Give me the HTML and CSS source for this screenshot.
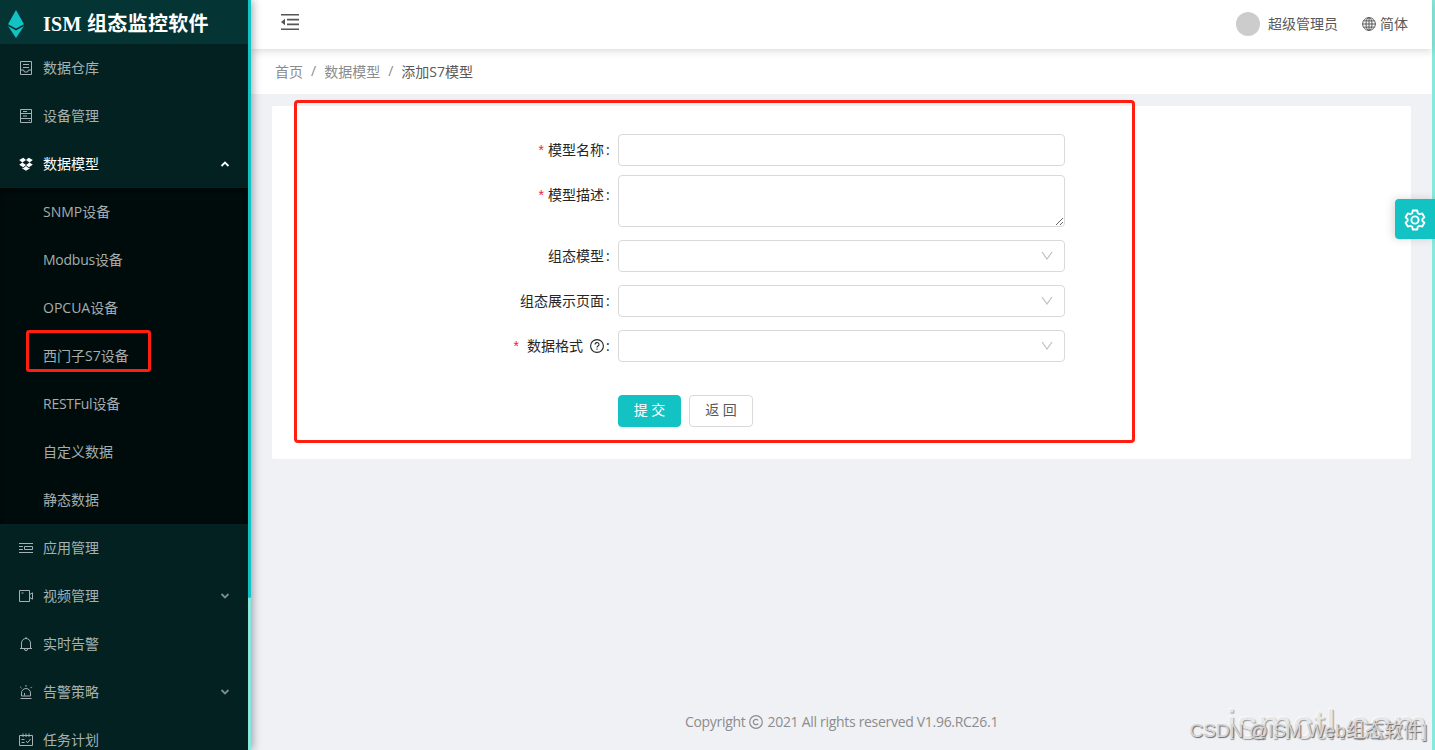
FILE: index.html
```html
<!DOCTYPE html>
<html lang="zh-CN">
<head>
  <meta charset="utf-8">
  <title>ISM 组态监控软件</title>
  <link rel="stylesheet" href="styles.css">
</head>
<body>
  <div class="layout">
    <aside class="sidebar">
      <div class="sidebar-content">
        <div class="logo">
          <svg class="logo-icon" viewBox="0 0 16 28">
            <path fill="#13c2c2" d="M8 0l8 14.2-8 4.3-8-4.3zM0 16l8 4.4L16 16 8 28z"/>
          </svg>
          <h1>ISM 组态监控软件</h1>
        </div>
        <ul class="menu">
          <li class="menu-item">
            <svg class="icon" viewBox="0 0 14 14"><path d="M1.5.5h11v13h-11zM4 3.5h6M4 6.5h6M1.5 9h3l1 2h3l1-2h3"/></svg>
            <span>数据仓库</span>
          </li>
          <li class="menu-item">
            <svg class="icon" viewBox="0 0 14 14"><path d="M1.5.5h11v13h-11zM1.5 4.5h11M1.5 9.5h11M4 2.5h4M4 7h4M9.8 11.5h1"/></svg>
            <span>设备管理</span>
          </li>
          <li class="menu-item active">
            <svg class="icon solid" viewBox="0 0 14 14"><path d="M4.2.7L7 3 3.4 5.6.2 3.1zM9.8.7L7 3l3.6 2.6 3.2-2.5zM.2 7.7l3.2-2.1L7 8.1l-2.8 2.2zM13.8 7.7l-3.2-2.1L7 8.1l2.8 2.2zM3.3 10.6l.9.6L7 9l2.8 2.2.9-.6v1L7 13.8l-3.7-2.2z"/></svg>
            <span>数据模型</span>
            <svg class="arrow" viewBox="0 0 10 6"><path d="M1.5 5L5 1.5 8.5 5"/></svg>
          </li>
          <li>
            <ul class="submenu">
              <li>SNMP设备</li>
              <li class="tight">Modbus设备</li>
              <li>OPCUA设备</li>
              <li class="marked">西门子S7设备</li>
              <li class="tight">RESTFul设备</li>
              <li>自定义数据</li>
              <li>静态数据</li>
            </ul>
          </li>
          <li class="menu-item">
            <svg class="icon" viewBox="0 0 14 14"><path d="M0 2.5h14M0 5.5h4M0 8.5h4M0 11.5h14M5.5 5.5h8v3h-8z"/></svg>
            <span>应用管理</span>
          </li>
          <li class="menu-item">
            <svg class="icon" viewBox="0 0 14 14"><path d="M.5 1.5h10v11H.5zM10.5 5.6l3-1.8v6.4l-3-1.8M2.5 4h2"/></svg>
            <span>视频管理</span>
            <svg class="arrow" viewBox="0 0 10 6"><path d="M1.5 1L5 4.5 8.5 1"/></svg>
          </li>
          <li class="menu-item">
            <svg class="icon" viewBox="0 0 14 14"><path d="M2.5 11.5V6a4.5 4.5 0 0 1 9 0v5.5M1 11.5h12M7 0v1.5M5.4 12a1.6 1.6 0 0 0 3.2 0"/></svg>
            <span>实时告警</span>
          </li>
          <li class="menu-item">
            <svg class="icon" viewBox="0 0 14 14"><path d="M2.5 11V8a4.5 4.5 0 0 1 9 0v3M1.5 13.5h11M2.5 11h9M7 0v1.8M1.2 1.8l1.3 1.3M12.8 1.8l-1.3 1.3M5.5 10.5V8"/></svg>
            <span>告警策略</span>
            <svg class="arrow" viewBox="0 0 10 6"><path d="M1.5 1L5 4.5 8.5 1"/></svg>
          </li>
          <li class="menu-item">
            <svg class="icon" viewBox="0 0 14 14"><path d="M.5 2.5h13v10H.5zM4 .5v3.5M7 .5v3.5M10 .5v3.5M2.5 6.5h3M2.5 9.5h3M7 8l1.6 1.8L11.5 6"/></svg>
            <span>任务计划</span>
          </li>
        </ul>
      </div>
      <div class="scroll-track"><div class="scroll-thumb"></div></div>
    </aside>

    <div class="main">
      <header class="header">
        <svg class="fold" viewBox="0 0 18 16"><path fill="none" stroke="#555" stroke-width="1.6" d="M0 .8h18M6 5.6h12M6 10.4h12M0 15.2h18"/><path fill="#555" d="M0 8l4-3.2v6.4z"/></svg>
        <div class="user">
          <span class="avatar"></span>
          <span class="user-name">超级管理员</span>
          <svg class="globe" viewBox="0 0 14 14"><circle cx="7" cy="7" r="6.4"/><ellipse cx="7" cy="7" rx="3" ry="6.4"/><path d="M7 .6v12.8M.6 7h12.8M1.5 3.9h11M1.5 10.1h11"/></svg>
          <span class="lang">简体</span>
        </div>
      </header>

      <nav class="breadcrumb">
        <span>首页</span><i>/</i><span>数据模型</span><i>/</i><span class="current">添加S7模型</span>
      </nav>

      <section class="card">
        <form class="form">
          <div class="form-row">
            <label for="name"><b>*</b><span>模型名称</span><em>:</em></label>
            <input id="name" type="text">
          </div>
          <div class="form-row">
            <label for="desc"><b>*</b><span>模型描述</span><em>:</em></label>
            <textarea id="desc"></textarea>
          </div>
          <div class="form-row">
            <label><span>组态模型</span><em>:</em></label>
            <div class="select"><svg viewBox="0 0 12 10"><path d="M1 1l5 7 5-7"/></svg></div>
          </div>
          <div class="form-row">
            <label><span>组态展示页面</span><em>:</em></label>
            <div class="select"><svg viewBox="0 0 12 10"><path d="M1 1l5 7 5-7"/></svg></div>
          </div>
          <div class="form-row">
            <label><b class="wide">*</b><span>数据格式</span><svg class="help" viewBox="0 0 14 14"><circle cx="7" cy="7" r="6.4"/><path d="M5 5.5a2 1.9 0 1 1 3 1.6c-.7.4-1 .7-1 1.4M7 9.6v1.2"/></svg><em>:</em></label>
            <div class="select"><svg viewBox="0 0 12 10"><path d="M1 1l5 7 5-7"/></svg></div>
          </div>
          <div class="form-actions">
            <button class="btn primary" type="button">提 交</button>
            <button class="btn" type="button">返 回</button>
          </div>
        </form>
      </section>

      <footer class="footer">
        <span>Copyright</span>
        <svg class="copy" viewBox="0 0 14 14"><circle cx="7" cy="7" r="6.3"/><path d="M9.2 5.4a2.7 2.7 0 1 0 0 3.2"/></svg>
        <span>2021 All rights reserved V1.96.RC26.1</span>
      </footer>
    </div>
    <div class="page-scroll"></div>
  </div>

  <div class="form-mark"></div>
  <div class="setting">
    <svg viewBox="0 0 22 22"><path d="M8.8 1.5h4.4l.6 2.7 1.7 1 2.7-.8 2.2 3.8-2 1.9v1.8l2 1.9-2.2 3.8-2.7-.8-1.7 1-.6 2.7H8.8l-.6-2.7-1.7-1-2.7.8-2.2-3.8 2-1.9v-1.8l-2-1.9 2.2-3.8 2.7.8 1.7-1z"/><circle cx="11" cy="11" r="3.6"/></svg>
  </div>
  <div class="watermark site">ismctl.com</div>
  <div class="watermark author">CSDN @ISM Web组态软件]</div>
</body>
</html>
```
FILE: styles.css
```css
*,
*::after {
  box-sizing: border-box;
}

body {
  margin: 0;
  height: 750px;
  overflow: hidden;
  position: relative;
  font-family: "Open Sans", "Noto Sans CJK SC", sans-serif;
  font-size: 14px;
  color: #595959;
  background-color: #f0f1f5;
}

ul {
  list-style: none;
  margin: 0;
  padding: 0;
}

.layout {
  display: flex;
  height: 750px;
}

/* Sidebar */
.sidebar {
  display: flex;
  width: 251px;
  flex-shrink: 0;
  overflow: hidden;
  box-shadow: 2px 0 8px rgba(0, 21, 41, 0.35);
  z-index: 2;
}

.sidebar-content {
  width: 248px;
  background-color: #032121;
}

.logo {
  display: flex;
  align-items: center;
  height: 44px;
  padding: 3px 0 0 8px;
  background-color: #053434;
}

.logo-icon {
  width: 16px;
  height: 28px;
}

.logo h1 {
  margin: 0 0 0 19px;
  font-family: "Liberation Serif", "Noto Sans CJK SC", serif;
  font-size: 20px;
  line-height: 30px;
  font-weight: bold;
  letter-spacing: 0.3px;
  color: #fff;
  white-space: nowrap;
}

.menu-item {
  display: flex;
  align-items: center;
  height: 48px;
  padding: 0 18px 0 19px;
  color: #a6b1b1;
}

.menu-item span {
  margin-bottom: 2px;
}

.menu-item.active {
  color: #fff;
}

.icon {
  width: 14px;
  height: 14px;
  margin-right: 10px;
  fill: none;
  stroke: currentColor;
  stroke-width: 1;
}

.icon.solid {
  fill: currentColor;
  stroke: none;
}

.arrow {
  width: 10px;
  height: 6px;
  margin-left: auto;
  fill: none;
  stroke: currentColor;
  stroke-width: 1.8;
}

.menu-item:not(.active) .arrow {
  stroke: #7d8c8c;
}

.submenu {
  background-color: #000c0c;
  box-shadow: inset 0 2px 8px rgba(0, 0, 0, 0.45);
}

.submenu li {
  height: 48px;
  padding-left: 43px;
  line-height: 48px;
  color: #a6adad;
}

.submenu .tight {
  letter-spacing: -0.25px;
}

.marked {
  position: relative;
}

.marked::after {
  content: "";
  position: absolute;
  left: 26px;
  top: -2px;
  width: 125px;
  height: 42px;
  border: 3px solid #ff1e0f;
  border-radius: 3px;
}

.scroll-track {
  width: 3px;
  background-color: #87e8de;
}

.scroll-thumb {
  height: 598px;
  background-color: #13c2c2;
  border-radius: 0 0 3px 3px;
}

/* Main column */
.main {
  display: flex;
  flex-direction: column;
  flex: 1;
}

.header {
  display: flex;
  align-items: center;
  justify-content: space-between;
  height: 49px;
  padding: 0 24px 0 30px;
  background-color: #fff;
  box-shadow: 0 2px 8px rgba(0, 0, 0, 0.15);
  z-index: 1;
}

.fold {
  width: 18px;
  height: 16px;
  margin-bottom: 5px;
}

.user {
  display: flex;
  align-items: center;
  padding-bottom: 2px;
}

.avatar {
  width: 24px;
  height: 24px;
  margin-right: 8px;
  border-radius: 50%;
  background-color: #ccc;
}

.user-name,
.lang {
  margin-bottom: 2px;
}

.user-name {
  margin-right: 24px;
}

.globe {
  width: 14px;
  height: 14px;
  margin-right: 4px;
  fill: none;
  stroke: #595959;
  stroke-width: 1;
}

.breadcrumb {
  display: flex;
  align-items: center;
  height: 45px;
  padding: 0 0 2px 24px;
  background-color: #fff;
  color: #8c8c8c;
}

.breadcrumb i {
  margin: 0 8px;
  font-style: normal;
}

.breadcrumb .current {
  color: #595959;
}

.card {
  height: 353px;
  margin: 12px 21px 0;
  padding-top: 28px;
  background-color: #fff;
  border-radius: 2px;
}

.form-row {
  display: flex;
  margin-bottom: 13px;
}

.form-row:first-child {
  margin-bottom: 9px;
}

label {
  display: flex;
  align-items: center;
  justify-content: flex-end;
  width: 338px;
  height: 32px;
  margin-right: 8px;
  color: #262626;
}

.form-row:nth-child(2) label {
  height: 40px;
}

label span,
label em {
  margin-bottom: 2px;
}

label b {
  margin-right: 4px;
  font-family: "Liberation Sans", sans-serif;
  font-weight: normal;
  color: #f5222d;
}

label b.wide {
  margin-right: 8px;
}

label em {
  width: 4px;
  margin-left: 2px;
  font-style: normal;
}

.help {
  width: 14px;
  height: 14px;
  margin-left: 7px;
  fill: none;
  stroke: #262626;
  stroke-width: 1.1;
}

input,
textarea,
.select {
  width: 447px;
  height: 32px;
  margin: 0;
  border: 1px solid #d9d9d9;
  border-radius: 4px;
  background-color: #fff;
}

textarea {
  height: 52px;
  resize: vertical;
}

.select {
  display: flex;
  align-items: center;
  justify-content: flex-end;
  padding-right: 11px;
}

.select svg {
  width: 12px;
  height: 10px;
  fill: none;
  stroke: #bfbfbf;
  stroke-width: 1.2;
}

.form-actions {
  display: flex;
  gap: 8px;
  padding: 20px 0 0 346px;
}

.btn {
  width: 64px;
  height: 32px;
  padding: 0 0 4px;
  border: 1px solid #d9d9d9;
  border-radius: 4px;
  background-color: #fff;
  font-family: inherit;
  font-size: 14px;
  color: #595959;
}

.btn.primary {
  width: 63px;
  border-color: #13c2c2;
  background-color: #13c2c2;
  color: #fff;
  box-shadow: 0 2px 0 rgba(0, 0, 0, 0.045);
}

.footer {
  display: flex;
  align-items: center;
  justify-content: center;
  gap: 4px;
  margin-top: auto;
  padding-bottom: 19px;
  letter-spacing: -0.3px;
  color: #8c8c8c;
}

.copy {
  width: 14px;
  height: 14px;
  fill: none;
  stroke: #8c8c8c;
  stroke-width: 1.2;
}

.page-scroll {
  width: 3px;
  background-color: #87e8de;
}

/* Overlays */
.form-mark {
  position: absolute;
  left: 294px;
  top: 100px;
  width: 841px;
  height: 343px;
  border: 3px solid #ff1e0f;
  border-radius: 4px;
  z-index: 3;
  pointer-events: none;
}

.setting {
  position: absolute;
  right: 0;
  top: 199px;
  display: flex;
  align-items: center;
  width: 40px;
  height: 40px;
  padding: 2px 0 0 9px;
  border-radius: 4px 0 0 4px;
  background-color: #13c2c2;
  box-shadow: -2px 0 8px rgba(0, 0, 0, 0.15);
  z-index: 4;
}

.setting svg {
  width: 22px;
  height: 22px;
  fill: none;
  stroke: #fff;
  stroke-width: 1.9;
  stroke-linejoin: round;
}

.watermark {
  position: absolute;
  white-space: nowrap;
  font-family: "Liberation Sans", "Noto Sans CJK SC", sans-serif;
  z-index: 5;
}

.site {
  right: 7px;
  top: 702px;
  font-size: 40px;
  line-height: 46px;
  letter-spacing: 1.2px;
  color: #e6e7e9;
  text-shadow: 1px 1px 1px #999, -1px -1px 0 #fafafa;
}

.author {
  right: 8px;
  top: 718px;
  font-size: 19px;
  line-height: 26px;
  color: #d4d5d8;
  text-shadow: 1px 1px 1px #666;
}
```
